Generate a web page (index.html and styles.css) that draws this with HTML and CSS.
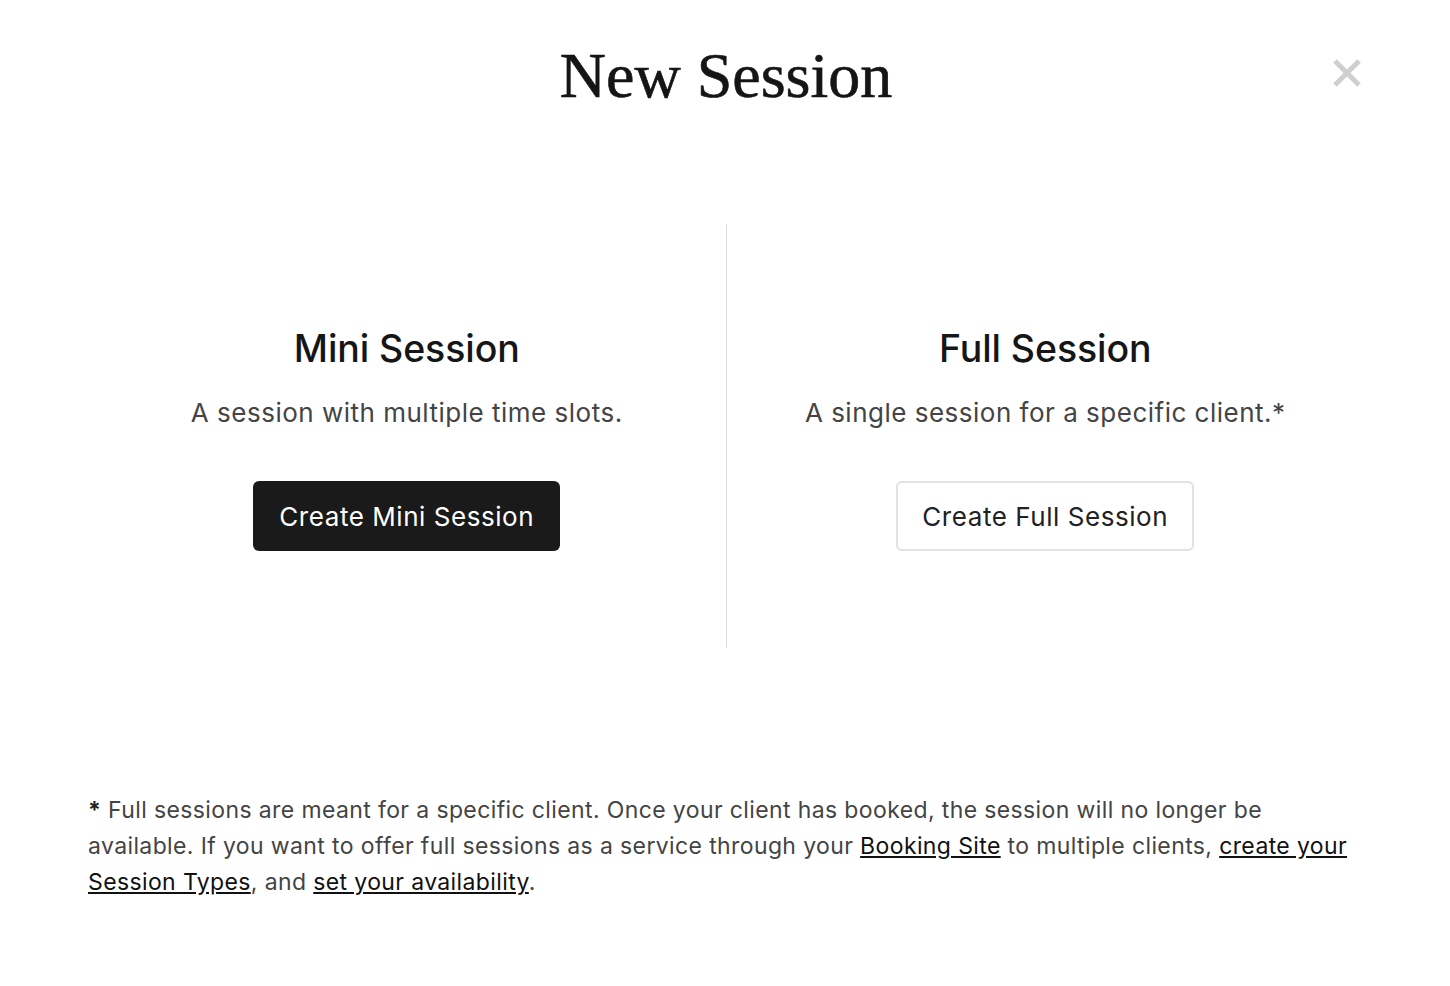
FILE: index.html
```html
<!DOCTYPE html>
<html lang="en">
<head>
  <meta charset="UTF-8" />
  <meta name="viewport" content="width=device-width, initial-scale=1.0"/>
  <title>New Session</title>
  <link rel="stylesheet" href="styles.css">
</head>
<body>
  <div class="modal">
    <header class="modal-header">
      <h1>New Session</h1>
      <button class="close" aria-label="Close">
        <svg width="30" height="30" viewBox="0 0 30 30">
          <path d="M3 3 L27 27 M27 3 L3 27" stroke="#cfcfcf" stroke-width="5" fill="none"/>
        </svg>
      </button>
    </header>

    <div class="options">
      <div class="option">
        <h2>Mini Session</h2>
        <p>A session with multiple time slots.</p>
        <button class="btn btn-dark">Create Mini Session</button>
      </div>
      <div class="divider"></div>
      <div class="option">
        <h2>Full Session</h2>
        <p>A single session for a specific client.*</p>
        <button class="btn btn-light">Create Full Session</button>
      </div>
    </div>

    <p class="note">
      <strong>*</strong> Full sessions are meant for a specific client. Once your client has booked, the session will no longer be
      available. If you want to offer full sessions as a service through your <a href="#">Booking Site</a> to multiple clients, <a href="#">create your
      Session Types</a>, and <a href="#">set your availability</a>.
    </p>
  </div>
</body>
</html>
```

FILE: styles.css
```css
body {
  margin: 0;
  background: #fff;
  font-family: Inter, "Noto Sans", sans-serif;
  color: #1a1a1a;
}

.modal {
  padding: 0 86px 0 88px;
}

.modal-header {
  position: relative;
  padding-top: 36px;
  text-align: center;
}

h1 {
  margin: 0;
  font-family: "Liberation Serif", serif;
  font-weight: 400;
  font-size: 64px;
  line-height: 80px;
  color: #151515;
  -webkit-text-stroke: 0.6px #151515;
}

.close {
  position: absolute;
  top: 58px;
  right: 2px;
  background: none;
  border: none;
  padding: 0;
  cursor: pointer;
}

.options {
  display: flex;
  margin-top: 108px;
  height: 424px;
}

.option {
  flex: 1;
  display: flex;
  flex-direction: column;
  align-items: center;
  justify-content: center;
  padding-top: 6px;
}

.divider {
  width: 1px;
  background: #dcdcdc;
}

h2 {
  margin: 0;
  font-size: 37.5px;
  font-weight: 500;
  line-height: 44px;
  letter-spacing: -0.1px;
  color: #161616;
}

.option p {
  margin: 22px 0 0;
  font-size: 26px;
  line-height: 40px;
  letter-spacing: 0.5px;
  color: #444;
}

.btn {
  margin-top: 48px;
  height: 70px;
  padding: 0 26px;
  font-family: Inter, "Noto Sans", sans-serif;
  font-size: 26px;
  letter-spacing: 0.55px;
  border-radius: 6px;
  cursor: pointer;
}

.btn-dark {
  background: #1a1a1a;
  color: #fff;
  border: none;
}

.btn-light {
  background: #fff;
  color: #222;
  border: 2px solid #e2e2e2;
  padding: 0 24px;
}

.note {
  margin: 144px 0 0;
  font-size: 23px;
  line-height: 36px;
  letter-spacing: 0.38px;
  color: #444;
}

.note strong {
  color: #222;
}

.note a {
  color: #111;
  text-decoration: underline;
  text-underline-offset: 2px;
}
```
